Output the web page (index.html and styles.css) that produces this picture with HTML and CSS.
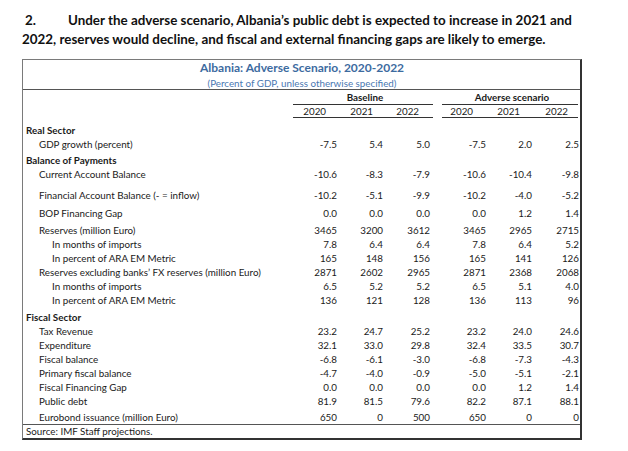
FILE: index.html
```html
<!DOCTYPE html>
<html lang="en">
<head>
<meta charset="utf-8">
<title>Albania: Adverse Scenario</title>
<link rel="stylesheet" href="styles.css">
</head>
<body>
<div class="page">
  <p class="lead"><span class="num">2.</span>Under the adverse scenario, Albania’s public debt is expected to increase in 2021 and<br>2022, reserves would decline, and fiscal and external financing gaps are likely to emerge.</p>
  <div class="box">
    <div class="titles">
      <div class="title">Albania: Adverse Scenario, 2020-2022</div>
      <div class="subtitle">(Percent of GDP, unless otherwise specified)</div>
    </div>
    <div class="row hdr1">
      <span class="l"></span>
      <span class="grp g1">Baseline</span>
      <span class="grp g2">Adverse scenario</span>
    </div>
    <div class="row hdr2">
      <span class="l"></span>
      <span class="grp g1 yrs yb"><span>2020</span><span>2021</span><span>2022</span></span>
      <span class="grp g2 yrs ya"><span>2020</span><span>2021</span><span>2022</span></span>
    </div>
    <div class="body">
      <div class="row sec first"><span class="l">Real Sector</span></div>
      <div class="row"><span class="l i1">GDP growth (percent)</span><span>-7.5</span><span>5.4</span><span>5.0</span><i></i><span>-7.5</span><span>2.0</span><span>2.5</span></div>
      <div class="row sec m2"><span class="l">Balance of Payments</span></div>
      <div class="row"><span class="l i1">Current Account Balance</span><span>-10.6</span><span>-8.3</span><span>-7.9</span><i></i><span>-10.6</span><span>-10.4</span><span>-9.8</span></div>
      <div class="row m7"><span class="l i1">Financial Account Balance (- = inflow)</span><span>-10.2</span><span>-5.1</span><span>-9.9</span><i></i><span>-10.2</span><span>-4.0</span><span>-5.2</span></div>
      <div class="row m4"><span class="l i1">BOP Financing Gap</span><span>0.0</span><span>0.0</span><span>0.0</span><i></i><span>0.0</span><span>1.2</span><span>1.4</span></div>
      <div class="row m3"><span class="l i1">Reserves (million Euro)</span><span>3465</span><span>3200</span><span>3612</span><i></i><span>3465</span><span>2965</span><span>2715</span></div>
      <div class="row"><span class="l i2">In months of imports</span><span>7.8</span><span>6.4</span><span>6.4</span><i></i><span>7.8</span><span>6.4</span><span>5.2</span></div>
      <div class="row"><span class="l i2">In percent of ARA EM Metric</span><span>165</span><span>148</span><span>156</span><i></i><span>165</span><span>141</span><span>126</span></div>
      <div class="row"><span class="l i1">Reserves excluding banks’ FX reserves (million Euro)</span><span>2871</span><span>2602</span><span>2965</span><i></i><span>2871</span><span>2368</span><span>2068</span></div>
      <div class="row"><span class="l i2">In months of imports</span><span>6.5</span><span>5.2</span><span>5.2</span><i></i><span>6.5</span><span>5.1</span><span>4.0</span></div>
      <div class="row"><span class="l i2">In percent of ARA EM Metric</span><span>136</span><span>121</span><span>128</span><i></i><span>136</span><span>113</span><span>96</span></div>
      <div class="row sec m3"><span class="l">Fiscal Sector</span></div>
      <div class="row"><span class="l i1">Tax Revenue</span><span>23.2</span><span>24.7</span><span>25.2</span><i></i><span>23.2</span><span>24.0</span><span>24.6</span></div>
      <div class="row"><span class="l i1">Expenditure</span><span>32.1</span><span>33.0</span><span>29.8</span><i></i><span>32.4</span><span>33.5</span><span>30.7</span></div>
      <div class="row"><span class="l i1">Fiscal balance</span><span>-6.8</span><span>-6.1</span><span>-3.0</span><i></i><span>-6.8</span><span>-7.3</span><span>-4.3</span></div>
      <div class="row"><span class="l i1">Primary fiscal balance</span><span>-4.7</span><span>-4.0</span><span>-0.9</span><i></i><span>-5.0</span><span>-5.1</span><span>-2.1</span></div>
      <div class="row"><span class="l i1">Fiscal Financing Gap</span><span>0.0</span><span>0.0</span><span>0.0</span><i></i><span>0.0</span><span>1.2</span><span>1.4</span></div>
      <div class="row"><span class="l i1">Public debt</span><span>81.9</span><span>81.5</span><span>79.6</span><i></i><span>82.2</span><span>87.1</span><span>88.1</span></div>
      <div class="row m3 last"><span class="l i1">Eurobond issuance (million Euro)</span><span>650</span><span>0</span><span>500</span><i></i><span>650</span><span>0</span><span>0</span></div>
    </div>
    <div class="source">Source: IMF Staff projections.</div>
  </div>
</div>
</body>
</html>
```

FILE: styles.css
```css
* { box-sizing: border-box; }

body {
  margin: 0;
  background: #ffffff;
  color: #1a1a1a;
  font-family: Lato, "Open Sans", sans-serif;
}

.page {
  padding: 11px 0 0 22px;
}

.lead {
  margin: 0 0 10px 0;
  font-weight: 700;
  font-size: 13.4px;
  line-height: 19px;
  white-space: nowrap;
  color: #111;
}

.lead .num {
  display: inline-block;
  width: 46px;
  padding-left: 3px;
}

.box {
  width: 560px;
  border-top: 1px solid #7a7a7a;
  border-left: 1px solid #7a7a7a;
  border-right: 2px solid #333;
  border-bottom: 2px solid #333;
  font-size: 9.8px;
}

.titles {
  text-align: center;
  border-bottom: 1px solid #555;
  padding-left: 1px;
}

.title {
  color: #3d6b9f;
  font-weight: 700;
  font-size: 12px;
  line-height: 16px;
}

.subtitle {
  color: #4a78b2;
  line-height: 12px;
  margin-top: 1px;
}

.row {
  display: grid;
  grid-template-columns: 268px 46px 46px 47px 10px 46px 46px 47px;
  line-height: 14px;
  white-space: nowrap;
}

.row > span {
  text-align: right;
}

.row > .l {
  text-align: left;
  padding-left: 3px;
}

.row > .i1 { padding-left: 16px; }
.row > .i2 { padding-left: 29px; }

.sec > .l { font-weight: 700; }

.grp {
  border-bottom: 1px solid #333;
  text-align: center;
}

.g1 {
  grid-column: 2 / span 4;
  margin: 0 7px 0 2px;
}

.g2 {
  grid-column: 6 / span 3;
  margin: 0 1px 0 2px;
}

.hdr1 .grp {
  font-weight: 700;
  text-align: center;
  padding-left: 4px;
}

.hdr2 {
  line-height: 12px;
}

.yrs {
  display: grid;
}

.yb { grid-template-columns: 33px 47px 46px; }
.ya { grid-template-columns: 31px 47px 48px; }

.yrs > span { text-align: right; }

.first { margin-top: 5px; }
.m2 { margin-top: 2px; }
.m3 { margin-top: 3px; }
.m4 { margin-top: 4px; }
.m7 { margin-top: 7px; }

.last { line-height: 13px; }

.source {
  border-top: 1px solid #555;
  line-height: 13px;
  padding-left: 3px;
}
```
